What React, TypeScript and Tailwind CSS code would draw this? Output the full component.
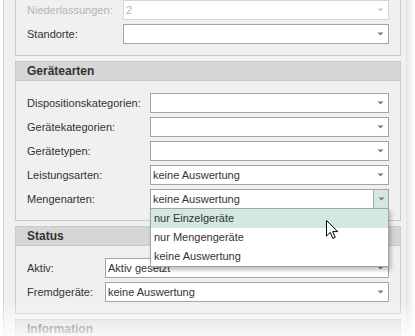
import type { ReactNode } from 'react';

function Arrow({ light }: { light?: boolean }) {
  return (
    <svg width="7" height="4" viewBox="0 0 7 4" className="shrink-0">
      <path d="M0.5 0.5 H6.5 L3.5 3.5 Z" fill={light ? '#cccccc' : '#7a7a7a'} />
    </svg>
  );
}

function Combo({ value, disabled, open }: { value?: string; disabled?: boolean; open?: boolean }) {
  return (
    <div
      className={`flex h-[20px] flex-1 items-center border bg-white ${
        disabled ? 'border-[#d6d6d6] text-[#b4b4b4]' : 'border-[#a4a4a4] text-[#333]'
      }`}
    >
      <span className="flex-1 truncate pl-[2px] leading-[18px]">{value}</span>
      <span
        className={`flex h-full w-[15px] items-center justify-center ${
          open ? 'border-l border-[#a4a4a4] bg-[#d3e8e1]' : ''
        }`}
      >
        <Arrow light={disabled} />
      </span>
    </div>
  );
}

function Row({
  label,
  labelWidth,
  value,
  disabled,
  open,
  children,
}: {
  label: string;
  labelWidth: string;
  value?: string;
  disabled?: boolean;
  open?: boolean;
  children?: ReactNode;
}) {
  return (
    <div className="relative flex h-[20px] items-center">
      <span className={`${labelWidth} shrink-0 ${disabled ? 'text-[#b4b4b4]' : 'text-[#333]'}`}>{label}</span>
      <Combo value={value} disabled={disabled} open={open} />
      {children}
    </div>
  );
}

function Group({ title, className, children }: { title?: string; className?: string; children: ReactNode }) {
  return (
    <section className={`border border-[#cacaca] bg-[#f0f0f0] ${className ?? ''}`}>
      {title && (
        <div className="flex h-[19px] items-center border-b border-[#cacaca] bg-[#d6d6d6] pl-[11px] text-[12px] font-bold text-[#333]">
          {title}
        </div>
      )}
      <div className="flex flex-col gap-[4px] pb-[11px] pl-[11px] pr-[11px] pt-[12px]">{children}</div>
    </section>
  );
}

const options = ['nur Einzelgeräte', 'nur Mengengeräte', 'keine Auswertung'];

export default function App() {
  return (
    <div className="relative h-[336px] w-[415px] overflow-hidden bg-white font-['Liberation_Sans',Arial,sans-serif] text-[11px] text-[#333]">
      <div className="ml-[3px] mr-[8px] flex h-full flex-col gap-[5px] border-x border-[#d2d2d2] bg-[#f0f0f0] pl-[11px] pr-[5px]">
        <Group className="-mt-[13px]">
          <Row label="Niederlassungen:" labelWidth="w-[96px]" value="2" disabled />
          <Row label="Standorte:" labelWidth="w-[96px]" />
        </Group>

        <Group title="Gerätearten">
          <Row label="Dispositionskategorien:" labelWidth="w-[123px]" />
          <Row label="Gerätekategorien:" labelWidth="w-[123px]" />
          <Row label="Gerätetypen:" labelWidth="w-[123px]" />
          <Row label="Leistungsarten:" labelWidth="w-[123px]" value="keine Auswertung" />
          <Row label="Mengenarten:" labelWidth="w-[123px]" value="keine Auswertung" open>
            <ul className="absolute left-[123px] right-0 top-[19px] z-10 border border-[#a4a4a4] bg-white shadow-[2px_3px_4px_rgba(0,0,0,0.25)]">
              {options.map((o, i) => (
                <li
                  key={o}
                  className={`flex h-[19px] items-center pl-[3px] text-[#333] ${i === 0 ? 'bg-[#d3e8e1]' : ''}`}
                >
                  {o}
                </li>
              ))}
            </ul>
          </Row>
        </Group>

        <Group title="Status">
          <Row label="Aktiv:" labelWidth="w-[78px]" value="Aktiv gesetzt" />
          <Row label="Fremdgeräte:" labelWidth="w-[78px]" value="keine Auswertung" />
        </Group>

        <Group title="Information">
          <Row label="" labelWidth="w-[78px]" />
        </Group>
      </div>

      {/* mouse pointer */}
      <svg width="13" height="20" viewBox="0 0 13 20" className="absolute left-[326px] top-[220px] z-20">
        <path
          d="M0.5 0.5 V16 L4.3 12.4 L6.8 18.4 L9.2 17.4 L6.8 11.6 H11.8 Z"
          fill="white"
          stroke="black"
          strokeWidth="1"
          strokeLinejoin="round"
        />
      </svg>

      {/* screenshot fade at right and bottom */}
      <div className="pointer-events-none absolute right-0 top-0 h-full w-[9px] bg-gradient-to-r from-[#e4e4e4] to-white" />
      <div className="pointer-events-none absolute bottom-0 left-0 h-[36px] w-full bg-gradient-to-b from-white/0 to-white/85" />
    </div>
  );
}
